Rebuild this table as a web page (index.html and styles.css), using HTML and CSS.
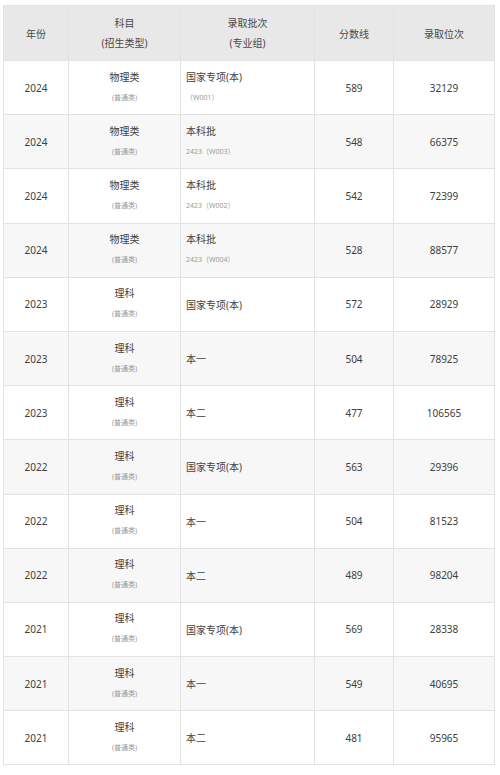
FILE: index.html
```html
<!DOCTYPE html>
<html lang="zh">
<head>
<meta charset="utf-8">
<link rel="stylesheet" href="styles.css">
</head>
<body>
<table class="score-table">
  <colgroup>
    <col class="c1"><col class="c2"><col class="c3"><col class="c4"><col class="c5">
  </colgroup>
  <thead>
    <tr>
      <th>年份</th>
      <th><div class="main">科目</div><div class="main">(招生类型)</div></th>
      <th><div class="main">录取批次</div><div class="main">(专业组)</div></th>
      <th>分数线</th>
      <th>录取位次</th>
    </tr>
  </thead>
  <tbody>
    <tr><td>2024</td><td><div class="main">物理类</div><div class="sub">(普通类)</div></td><td class="left"><div class="main">国家专项(本)</div><div class="sub">（W001）</div></td><td>589</td><td>32129</td></tr>
    <tr><td>2024</td><td><div class="main">物理类</div><div class="sub">(普通类)</div></td><td class="left"><div class="main">本科批</div><div class="sub">2423（W003）</div></td><td>548</td><td>66375</td></tr>
    <tr><td>2024</td><td><div class="main">物理类</div><div class="sub">(普通类)</div></td><td class="left"><div class="main">本科批</div><div class="sub">2423（W002）</div></td><td>542</td><td>72399</td></tr>
    <tr><td>2024</td><td><div class="main">物理类</div><div class="sub">(普通类)</div></td><td class="left"><div class="main">本科批</div><div class="sub">2423（W004）</div></td><td>528</td><td>88577</td></tr>
    <tr><td>2023</td><td><div class="main">理科</div><div class="sub">(普通类)</div></td><td class="left">国家专项(本)</td><td>572</td><td>28929</td></tr>
    <tr><td>2023</td><td><div class="main">理科</div><div class="sub">(普通类)</div></td><td class="left">本一</td><td>504</td><td>78925</td></tr>
    <tr><td>2023</td><td><div class="main">理科</div><div class="sub">(普通类)</div></td><td class="left">本二</td><td>477</td><td>106565</td></tr>
    <tr><td>2022</td><td><div class="main">理科</div><div class="sub">(普通类)</div></td><td class="left">国家专项(本)</td><td>563</td><td>29396</td></tr>
    <tr><td>2022</td><td><div class="main">理科</div><div class="sub">(普通类)</div></td><td class="left">本一</td><td>504</td><td>81523</td></tr>
    <tr><td>2022</td><td><div class="main">理科</div><div class="sub">(普通类)</div></td><td class="left">本二</td><td>489</td><td>98204</td></tr>
    <tr><td>2021</td><td><div class="main">理科</div><div class="sub">(普通类)</div></td><td class="left">国家专项(本)</td><td>569</td><td>28338</td></tr>
    <tr><td>2021</td><td><div class="main">理科</div><div class="sub">(普通类)</div></td><td class="left">本一</td><td>549</td><td>40695</td></tr>
    <tr><td>2021</td><td><div class="main">理科</div><div class="sub">(普通类)</div></td><td class="left">本二</td><td>481</td><td>95965</td></tr>
  </tbody>
</table>
</body>
</html>
```
FILE: styles.css
```css
html, body {
  margin: 0;
  padding: 0;
  background: #ffffff;
}
body {
  padding: 5px 0 0 3px;
  font-family: "Noto Sans", "Noto Sans CJK SC", sans-serif;
  font-size: 10px;
  color: #404040;
}
.score-table {
  border-collapse: collapse;
  table-layout: fixed;
  width: 491px;
  border: 1px solid #dcdcdc;
}
.c1 { width: 65px; }
.c2 { width: 112px; }
.c3 { width: 134px; }
.c4 { width: 79px; }
.c5 { width: 101px; }
.score-table th,
.score-table td {
  border: 1px solid #e2e2e2;
  text-align: center;
  vertical-align: middle;
  padding: 0;
  font-weight: normal;
}
.score-table thead tr {
  height: 55px;
  background: #e8e8e8;
}
.score-table th {
  color: #484848;
}
.score-table tbody tr {
  height: 54.2px;
}
.score-table tbody tr:nth-child(even) {
  background: #f7f7f7;
}
.score-table td.left {
  text-align: left;
  padding-left: 5px;
}
.main {
  line-height: 20px;
}
.sub {
  font-size: 7px;
  line-height: 22px;
  color: #9a9a9a;
}
```
